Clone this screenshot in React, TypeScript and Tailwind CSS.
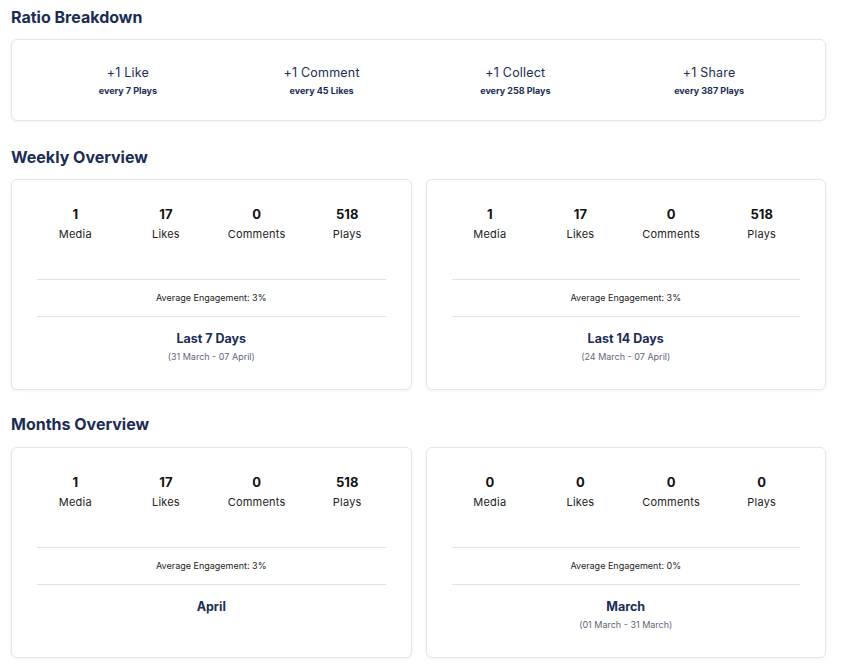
import React from "react";

const font = { fontFamily: "Inter, 'Noto Sans', sans-serif" };

function Heading({ children }: { children: React.ReactNode }) {
  return (
    <h2 className="text-[16px] leading-[24px] font-bold text-[#1b2c54]">{children}</h2>
  );
}

function Card({ children, className = "" }: { children: React.ReactNode; className?: string }) {
  return (
    <div className={`bg-white border border-[#e6e6e6] rounded-[6px] shadow-[0_1px_3px_rgba(0,0,0,0.06)] ${className}`}>
      {children}
    </div>
  );
}

type Stats = { media: number; likes: number; comments: number; plays: number };

function OverviewCard({ stats, engagement, title, range }: { stats: Stats; engagement: string; title: string; range?: string }) {
  const items: [number, string][] = [
    [stats.media, "Media"],
    [stats.likes, "Likes"],
    [stats.comments, "Comments"],
    [stats.plays, "Plays"],
  ];
  return (
    <Card className="h-[211px] px-[18px] pt-[24px]">
      <div className="grid grid-cols-4">
        {items.map(([n, l]) => (
          <div key={l} className="flex flex-col items-center">
            <div className="text-[13px] leading-[20px] font-bold text-[#111]">{n}</div>
            <div className="text-[11px] leading-[20px] text-[#222] tracking-[0.2px]">{l}</div>
          </div>
        ))}
      </div>
      <div className="mx-[7px] mt-[35px] border-t border-[#e3e3e3]" />
      <div className="mx-[7px] h-[36px] flex items-center justify-center text-[9px] text-[#222]">
        Average Engagement: {engagement}
      </div>
      <div className="mx-[7px] border-t border-[#e3e3e3]" />
      <div className="flex flex-col items-center pt-[12px]">
        <div className="text-[12.5px] leading-[20px] font-bold text-[#1b2c54]">{title}</div>
        {range && <div className="text-[9px] leading-[16px] text-[#5f6677]">{range}</div>}
      </div>
    </Card>
  );
}

export default function App() {
  const ratios = [
    ["+1 Like", "every 7 Plays"],
    ["+1 Comment", "every 45 Likes"],
    ["+1 Collect", "every 258 Plays"],
    ["+1 Share", "every 387 Plays"],
  ];
  const s: Stats = { media: 1, likes: 17, comments: 0, plays: 518 };
  const z: Stats = { media: 0, likes: 0, comments: 0, plays: 0 };
  return (
    <div style={font} className="bg-white w-[846px] min-h-[666px] pl-[11px] pr-[20px] pt-[5px]">
      <Heading>Ratio Breakdown</Heading>
      <Card className="mt-[10px] h-[82px] px-[19px] pt-[2px] grid grid-cols-4 items-center">
        {ratios.map(([a, b]) => (
          <div key={a} className="flex flex-col items-center">
            <div className="text-[12.5px] leading-[18px] text-[#1b2c54] tracking-[0.2px]">{a}</div>
            <div className="text-[9px] leading-[14px] font-bold text-[#1b2c54] mt-[2px]">{b}</div>
          </div>
        ))}
      </Card>
      <div className="mt-[24px]">
        <Heading>Weekly Overview</Heading>
      </div>
      <div className="mt-[10px] grid grid-cols-2 gap-[14px]">
        <OverviewCard stats={s} engagement="3%" title="Last 7 Days" range="(31 March - 07 April)" />
        <OverviewCard stats={s} engagement="3%" title="Last 14 Days" range="(24 March - 07 April)" />
      </div>
      <div className="mt-[22px]">
        <Heading>Months Overview</Heading>
      </div>
      <div className="mt-[11px] grid grid-cols-2 gap-[14px]">
        <OverviewCard stats={s} engagement="3%" title="April" />
        <OverviewCard stats={z} engagement="0%" title="March" range="(01 March - 31 March)" />
      </div>
    </div>
  );
}
